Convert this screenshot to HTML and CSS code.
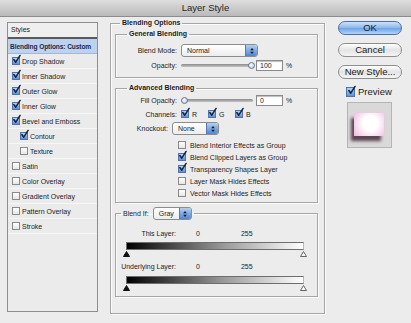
FILE: index.html
```html
<!DOCTYPE html>
<html>
<head>
<meta charset="utf-8">
<link rel="stylesheet" href="styles.css">
</head>
<body>
<div class="titlebar">Layer Style</div>
<div class="main">
  <div class="styles">
    <div class="styles-head">Styles</div>
    <div class="item sel">Blending Options: Custom</div>
    <div class="item"><span class="cb on"><svg viewBox="0 0 10 10"><path d="M2 5 L4.2 8 L9 0.5"/></svg></span>Drop Shadow</div>
    <div class="item"><span class="cb on"><svg viewBox="0 0 10 10"><path d="M2 5 L4.2 8 L9 0.5"/></svg></span>Inner Shadow</div>
    <div class="item"><span class="cb on"><svg viewBox="0 0 10 10"><path d="M2 5 L4.2 8 L9 0.5"/></svg></span>Outer Glow</div>
    <div class="item"><span class="cb on"><svg viewBox="0 0 10 10"><path d="M2 5 L4.2 8 L9 0.5"/></svg></span>Inner Glow</div>
    <div class="item"><span class="cb on"><svg viewBox="0 0 10 10"><path d="M2 5 L4.2 8 L9 0.5"/></svg></span>Bevel and Emboss</div>
    <div class="item sub"><span class="cb on"><svg viewBox="0 0 10 10"><path d="M2 5 L4.2 8 L9 0.5"/></svg></span>Contour</div>
    <div class="item sub"><span class="cb"></span>Texture</div>
    <div class="item"><span class="cb"></span>Satin</div>
    <div class="item"><span class="cb"></span>Color Overlay</div>
    <div class="item"><span class="cb"></span>Gradient Overlay</div>
    <div class="item"><span class="cb"></span>Pattern Overlay</div>
    <div class="item"><span class="cb"></span>Stroke</div>
  </div>

  <fieldset class="group outer">
    <legend>Blending Options</legend>

    <fieldset class="group general">
      <legend>General Blending</legend>
      <div class="row h13">
        <span class="lbl">Blend Mode:</span>
        <span class="select mode">Normal<span class="arrows"><svg viewBox="0 0 8 10"><path d="M4 1 L6.5 4 L1.5 4 Z M4 9 L6.5 6 L1.5 6 Z"/></svg></span></span>
      </div>
      <div class="row h11 mt3">
        <span class="lbl">Opacity:</span>
        <span class="slider"><span class="track"></span><span class="thumb right"></span></span>
        <span class="num">100</span><span class="pct">%</span>
      </div>
    </fieldset>

    <fieldset class="group advanced">
      <legend>Advanced Blending</legend>
      <div class="row h11">
        <span class="lbl">Fill Opacity:</span>
        <span class="slider"><span class="track"></span><span class="thumb left"></span></span>
        <span class="num">0</span><span class="pct">%</span>
      </div>
      <div class="row h12 mt2">
        <span class="lbl">Channels:</span>
        <span class="chan"><span class="cb on"><svg viewBox="0 0 10 10"><path d="M2 5 L4.2 8 L9 0.5"/></svg></span>R</span>
        <span class="chan"><span class="cb on"><svg viewBox="0 0 10 10"><path d="M2 5 L4.2 8 L9 0.5"/></svg></span>G</span>
        <span class="chan"><span class="cb on"><svg viewBox="0 0 10 10"><path d="M2 5 L4.2 8 L9 0.5"/></svg></span>B</span>
      </div>
      <div class="row h13 mt2">
        <span class="lbl ko">Knockout:</span>
        <span class="select knock">None<span class="arrows"><svg viewBox="0 0 8 10"><path d="M4 1 L6.5 4 L1.5 4 Z M4 9 L6.5 6 L1.5 6 Z"/></svg></span></span>
      </div>
      <div class="checklist">
        <div class="citem"><span class="cb"></span>Blend Interior Effects as Group</div>
        <div class="citem"><span class="cb on"><svg viewBox="0 0 10 10"><path d="M2 5 L4.2 8 L9 0.5"/></svg></span>Blend Clipped Layers as Group</div>
        <div class="citem"><span class="cb on"><svg viewBox="0 0 10 10"><path d="M2 5 L4.2 8 L9 0.5"/></svg></span>Transparency Shapes Layer</div>
        <div class="citem"><span class="cb"></span>Layer Mask Hides Effects</div>
        <div class="citem"><span class="cb"></span>Vector Mask Hides Effects</div>
      </div>
    </fieldset>

    <fieldset class="group blendif">
      <legend><span>Blend If:</span><span class="select gray">Gray<span class="arrows"><svg viewBox="0 0 8 10"><path d="M4 1 L6.5 4 L1.5 4 Z M4 9 L6.5 6 L1.5 6 Z"/></svg></span></span></legend>
      <div class="bl-row">
        <span class="bl-lbl">This Layer:</span><span class="v0">0</span><span class="v255">255</span>
      </div>
      <div class="bar"></div>
      <div class="tris">
        <svg viewBox="0 0 7 6" class="tri"><path d="M3.5 0.5 L6.5 5.5 L0.5 5.5 Z" fill="#111" stroke="#111"/></svg>
        <svg viewBox="0 0 7 6" class="tri"><path d="M3.5 0.5 L6.5 5.5 L0.5 5.5 Z" fill="#fff" stroke="#666"/></svg>
      </div>
      <div class="bl-row mt4">
        <span class="bl-lbl">Underlying Layer:</span><span class="v0">0</span><span class="v255">255</span>
      </div>
      <div class="bar mt5"></div>
      <div class="tris">
        <svg viewBox="0 0 7 6" class="tri"><path d="M3.5 0.5 L6.5 5.5 L0.5 5.5 Z" fill="#111" stroke="#111"/></svg>
        <svg viewBox="0 0 7 6" class="tri"><path d="M3.5 0.5 L6.5 5.5 L0.5 5.5 Z" fill="#fff" stroke="#666"/></svg>
      </div>
    </fieldset>
  </fieldset>

  <div class="actions">
    <div class="btn ok">OK</div>
    <div class="btn">Cancel</div>
    <div class="btn">New Style...</div>
    <div class="preview"><span class="cb big on"><svg viewBox="0 0 10 10"><path d="M2 5 L4.2 8 L9 0.5"/></svg></span>Preview</div>
    <div class="swatch"><div class="swatch-in"></div></div>
  </div>
</div>
</body>
</html>
```

FILE: styles.css
```css
* { box-sizing: border-box; }
html, body { margin: 0; padding: 0; }
body {
  width: 411px;
  height: 323px;
  overflow: hidden;
  background: #ececec;
  font-family: "Liberation Sans", Arial, sans-serif;
  font-size: 7px;
  color: #1c1c1c;
}
.titlebar {
  height: 17px;
  background: linear-gradient(#dedede, #bababa);
  border-bottom: 1px solid #8c8c8c;
  text-align: center;
  font-size: 9.5px;
  line-height: 16px;
  color: #262626;
}
.main {
  display: flex;
  align-items: flex-start;
  padding-left: 7px;
}

/* left styles list */
.styles {
  margin-top: 5px;
  width: 91px;
  height: 290px;
  border: 1px solid #8e8e8e;
  background: #ebebeb;
}
.styles-head {
  height: 16px;
  line-height: 14px;
  padding-left: 3px;
  background: #efefef;
  border-bottom: 2px solid #5a5a5a;
}
.item {
  height: 15px;
  display: flex;
  align-items: center;
  gap: 2px;
  padding-left: 4px;
  white-space: nowrap;
  border-bottom: 1px solid #f7f7f7;
}
.item.sub { padding-left: 12px; }
.item.sel {
  background: #bcd2ef;
  font-weight: bold;
  font-size: 6.6px;
  letter-spacing: -0.1px;
  color: #1b2b4b;
  padding-left: 2px;
  border-bottom: 1px solid #9fb8dc;
}

/* checkbox */
.cb {
  width: 8px;
  height: 8px;
  flex: none;
  border: 1px solid #8a8a8a;
  background: linear-gradient(#ffffff, #e6e6e6);
  display: inline-flex;
  align-items: center;
  justify-content: center;
  overflow: visible;
}
.cb.on {
  border-color: #4e73ad;
  background: linear-gradient(#b9d3f2, #5c91d6);
}
.cb svg {
  width: 9px;
  height: 9px;
  margin-top: -3px;
  margin-left: 1px;
  overflow: visible;
}
.cb svg path {
  fill: none;
  stroke: #17243d;
  stroke-width: 1.7;
  stroke-linecap: round;
  stroke-linejoin: round;
}
.cb.big { width: 9px; height: 10px; }

/* groups */
.group {
  margin: 0;
  padding: 0;
  min-width: 0;
  border: 1px solid #a6a6a6;
  box-shadow: inset 1px 1px 0 #fbfbfb, 1px 1px 0 #fbfbfb;
}
.group > legend {
  font-weight: bold;
  line-height: 10px;
  padding: 0 2px;
  margin-left: 11px;
  color: #1c1c1c;
}
.outer {
  margin-top: 1px;
  margin-left: 12px;
  width: 215px;
  padding: 0 6px 16px 4px;
}
.outer > legend { margin-left: 5px; }
.general {
  margin-top: 1px;
  padding: 5px 0 6px 0;
}
.advanced {
  margin-top: 5px;
  padding: 2px 0 3px 0;
}
.row {
  display: flex;
  align-items: center;
}
.h11 { height: 11px; }
.h12 { height: 12px; }
.h13 { height: 13px; }
.mt2 { margin-top: 2px; }
.mt3 { margin-top: 3px; }
.mt4 { margin-top: 4px; }
.mt5 { margin-top: 5px; }
.lbl {
  width: 65px;
  text-align: right;
  padding-right: 4px;
  flex: none;
}
.lbl.ko { width: 56px; }

/* select */
.select {
  display: flex;
  align-items: center;
  height: 13px;
  padding-left: 5px;
  border: 1px solid #8c8c8c;
  border-radius: 3px;
  background: linear-gradient(#ffffff, #ededed);
  overflow: hidden;
  font-weight: normal;
}
.select .arrows {
  margin-left: auto;
  width: 12px;
  height: 100%;
  display: flex;
  align-items: center;
  justify-content: center;
  background: linear-gradient(#b3cff0, #4f86d0);
  border-left: 1px solid #5879ad;
}
.select .arrows svg { width: 6px; height: 8px; }
.select .arrows path { fill: #101c33; }
.mode { width: 77px; }
.knock { width: 47px; }
.gray { width: 39px; }

/* slider */
.slider {
  position: relative;
  width: 72px;
  height: 11px;
  margin-right: 3px;
  display: flex;
  align-items: center;
}
.track {
  width: 100%;
  height: 3px;
  border-radius: 2px;
  background: linear-gradient(#8a8a8a, #c4c4c4);
}
.thumb {
  position: absolute;
  top: 2px;
  width: 7px;
  height: 7px;
  border-radius: 50%;
  border: 1px solid #6b7890;
  background: radial-gradient(circle at 40% 40%, #ffffff, #a9bfdc);
}
.thumb.right { right: -2px; }
.thumb.left { left: 0; }
.num {
  width: 27px;
  height: 11px;
  border: 1px solid #8a8a8a;
  box-shadow: inset 0 1px 1px #bdbdbd;
  background: #fff;
  padding-left: 3px;
  line-height: 9px;
}
.pct { margin-left: 3px; }
.chan {
  display: flex;
  align-items: center;
  gap: 3px;
  width: 27px;
}
.checklist {
  margin-top: 4px;
  margin-left: 62px;
}
.citem {
  height: 12px;
  display: flex;
  align-items: center;
  gap: 4px;
}

/* blend if */
.blendif {
  margin-top: 4px;
  padding: 8px 13px 5px 0;
}
.blendif > legend {
  display: flex;
  align-items: center;
  gap: 4px;
  font-weight: normal;
  margin-left: 5px;
  line-height: 13px;
}
.bl-row {
  display: flex;
  align-items: center;
  height: 10px;
}
.bl-lbl {
  width: 60px;
  text-align: right;
  flex: none;
}
.v0 { margin-left: 20px; }
.v255 { margin-left: 41px; }
.bar {
  margin-top: 4px;
  margin-left: 10px;
  height: 8px;
  border: 1px solid #6e6e6e;
  border-right-color: #bbb;
  background: linear-gradient(to right, #000 0%, #2a2a2a 15%, #9a9a9a 55%, #f4f4f4 95%, #fff 100%);
}
.bar.mt5 { margin-top: 5px; }
.tris {
  display: flex;
  justify-content: space-between;
  height: 7px;
  margin-left: 7px;
  margin-right: -3px;
  align-items: center;
}
.tri { width: 7px; height: 6px; display: block; }

/* right column */
.actions {
  margin-left: 13px;
  margin-top: 4px;
  width: 64px;
  display: flex;
  flex-direction: column;
}
.btn {
  height: 14px;
  margin-bottom: 8px;
  border-radius: 7px;
  border: 1px solid #8e8e8e;
  background: linear-gradient(#ffffff, #e4e4e4 50%, #f4f4f4);
  font-size: 9.5px;
  line-height: 12px;
  text-align: center;
  color: #1a1a1a;
}
.btn.ok {
  border-color: #4b6fa6;
  background: linear-gradient(#cfe2fa, #8ab6ec 50%, #6ea4e6 55%, #b5d5fa);
}
.preview {
  margin-top: -1px;
  padding-left: 8px;
  height: 11px;
  display: flex;
  align-items: center;
  gap: 3px;
  font-size: 9.5px;
}
.swatch {
  margin-top: 5px;
  margin-left: 9px;
  width: 45px;
  height: 46px;
  border: 1px solid #b5b5b5;
  background: #d9d9d9;
  padding: 10px 8px 12px 6px;
}
.swatch-in {
  width: 30px;
  height: 23px;
  background: radial-gradient(circle at 55% 45%, #ffffff 35%, #f4d4ec 75%, #eab8dc);
  box-shadow: -3px 5px 3px rgba(70, 45, 60, 0.85), 0 0 3px #f2c4e4;
}
```
